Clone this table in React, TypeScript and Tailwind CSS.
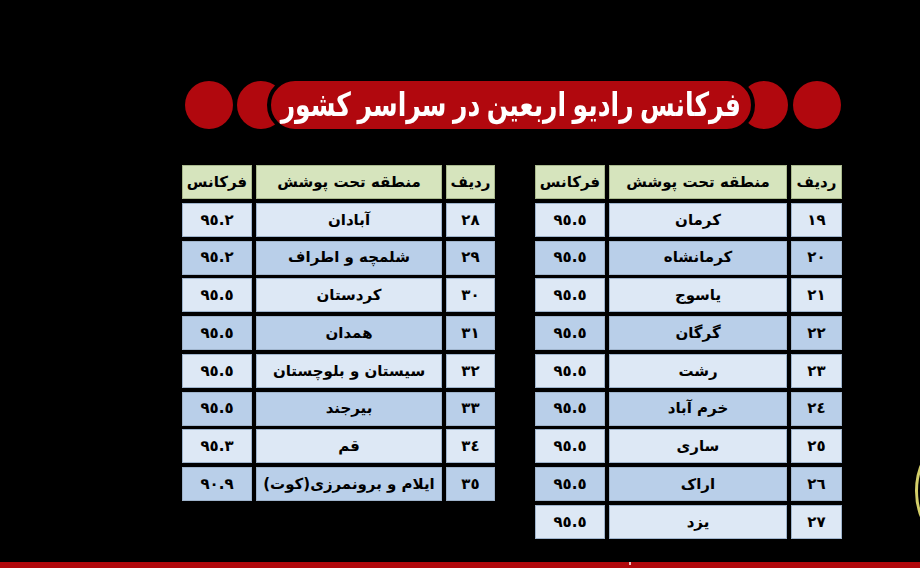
import React from "react";

const toFa = (s: string) =>
  s.replace(/[0-9]/g, (d) => "٠١٢٣٤٥٦٧٨٩"[Number(d)]);

type Row = { id: string; region: string; freq: string };

const rightRows: Row[] = [
  { id: "19", region: "کرمان", freq: "95.5" },
  { id: "20", region: "کرمانشاه", freq: "95.5" },
  { id: "21", region: "یاسوج", freq: "95.5" },
  { id: "22", region: "گرگان", freq: "95.5" },
  { id: "23", region: "رشت", freq: "95.5" },
  { id: "24", region: "خرم آباد", freq: "95.5" },
  { id: "25", region: "ساری", freq: "95.5" },
  { id: "26", region: "اراک", freq: "95.5" },
  { id: "27", region: "یزد", freq: "95.5" },
];

const leftRows: Row[] = [
  { id: "28", region: "آبادان", freq: "95.2" },
  { id: "29", region: "شلمچه و اطراف", freq: "95.2" },
  { id: "30", region: "کردستان", freq: "95.5" },
  { id: "31", region: "همدان", freq: "95.5" },
  { id: "32", region: "سیستان و بلوچستان", freq: "95.5" },
  { id: "33", region: "بیرجند", freq: "95.5" },
  { id: "34", region: "قم", freq: "95.3" },
  { id: "35", region: "ایلام و برونمرزی(کوت)", freq: "90.9" },
];

const font = { fontFamily: '"DejaVu Sans", "Noto Sans", sans-serif' };

function Table({ rows, cols }: { rows: Row[]; cols: string }) {
  const cell =
    "h-[34px] flex items-center justify-center text-[15px] font-bold text-black border border-[#9fb4cc]";
  return (
    <div
      dir="rtl"
      className={`grid ${cols} gap-x-[4px] gap-y-[3.75px]`}
      style={font}
    >
      <div className={`${cell} bg-[#d6e4bd] border-[#a9b98e]`}>ردیف</div>
      <div className={`${cell} bg-[#d6e4bd] border-[#a9b98e]`}>منطقه تحت پوشش</div>
      <div className={`${cell} bg-[#d6e4bd] border-[#a9b98e]`}>فرکانس</div>
      {rows.map((r, i) => {
        const bg = i % 2 === 0 ? "bg-[#dde8f5]" : "bg-[#b9cfe9]";
        return (
          <React.Fragment key={r.id}>
            <div className={`${cell} ${bg}`}>{toFa(r.id)}</div>
            <div className={`${cell} ${bg}`}>{r.region}</div>
            <div className={`${cell} ${bg}`}>
              <span dir="ltr">{toFa(r.freq)}</span>
            </div>
          </React.Fragment>
        );
      })}
    </div>
  );
}

export default function App() {
  return (
    <div className="relative w-[920px] h-[568px] bg-black overflow-hidden flex flex-col">
      {/* Banner */}
      <div className="flex items-center mt-[77px] ml-[185px] h-[56px]">
        <div className="w-[48px] h-[48px] rounded-full bg-[#b1080e] shrink-0" />
        <div className="w-[48px] h-[48px] rounded-full bg-[#b1080e] ml-[4px] shrink-0" />
        <div
          className="relative z-10 -ml-[18px] w-[488px] h-[56px] rounded-full border-[4px] border-black bg-[#b1080e] flex items-center justify-center shrink-0 overflow-hidden"
          style={font}
        >
          <span
            dir="rtl"
            className="block text-white font-bold text-[33px] leading-none whitespace-nowrap scale-x-[0.76] [word-spacing:-3px] -mt-[2px]"
          >
            فرکانس رادیو اربعین در سراسر کشور
          </span>
        </div>
        <div className="w-[48px] h-[48px] rounded-full bg-[#b1080e] -ml-[15px] shrink-0" />
        <div className="w-[48px] h-[48px] rounded-full bg-[#b1080e] ml-[5px] shrink-0" />
      </div>

      {/* Tables */}
      <div dir="rtl" className="flex items-start gap-[40px] mt-[32px] ml-[182px] w-[660px]">
        <Table rows={rightRows} cols="grid-cols-[51px_178px_70px]" />
        <Table rows={leftRows} cols="grid-cols-[49px_186px_70px]" />
      </div>

      {/* decorative arc on the right edge */}
      <div className="absolute left-[915px] top-[421px] w-[140px] h-[140px] rounded-full border-[3px] border-[#d4cf6a] blur-[0.5px]" />

      {/* bottom red strip */}
      <div className="absolute left-0 bottom-0 w-full h-[6px] bg-[#b0080b]" />
      <div className="absolute left-[629px] top-[562px] w-[2px] h-[3px] bg-[#f0c0c0]" />
    </div>
  );
}
